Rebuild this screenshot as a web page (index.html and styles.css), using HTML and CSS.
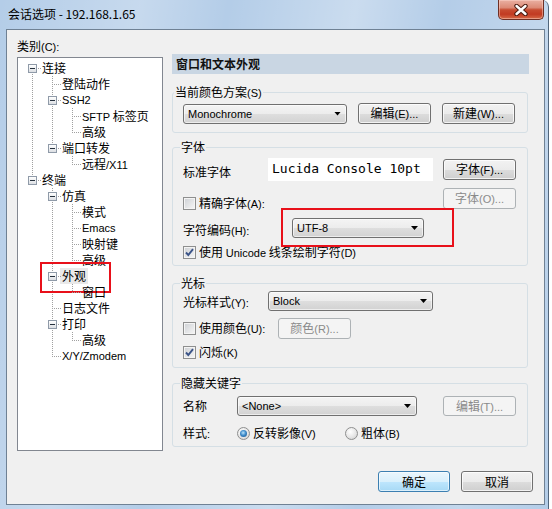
FILE: index.html
```html
<!DOCTYPE html>
<html lang="zh-CN">
<head>
<meta charset="utf-8">
<title>会话选项 - 192.168.1.65</title>
<link rel="stylesheet" href="styles.css">
</head>
<body>
<div class="window">
  <div class="titlebar">
    <span class="title">会话选项 - 192.168.1.65</span>
    <div class="close">
      <svg width="14" height="12" viewBox="0 0 14 12"><path d="M2.5 2 L11.5 10 M11.5 2 L2.5 10" stroke="#4a1b10" stroke-width="4.4" stroke-linecap="round"/><path d="M2.5 2 L11.5 10 M11.5 2 L2.5 10" stroke="#fff" stroke-width="2.4" stroke-linecap="round"/></svg>
    </div>
  </div>
  <div class="client">
    <div class="main">
      <div class="left">
        <div class="cat-label">类别<span class="en">(C):</span></div>
        <div class="tree">
          <ul>
            <li>
              <div class="node"><i class="exp"></i><span class="txt">连接</span></div>
              <ul>
                <li><div class="node"><i class="sp"></i><span class="txt">登陆动作</span></div></li>
                <li>
                  <div class="node"><i class="exp"></i><span class="txt en">SSH2</span></div>
                  <ul>
                    <li><div class="node"><i class="sp"></i><span class="txt"><span class="en">SFTP</span> 标签页</span></div></li>
                    <li><div class="node"><i class="sp"></i><span class="txt">高级</span></div></li>
                  </ul>
                </li>
                <li>
                  <div class="node"><i class="exp"></i><span class="txt">端口转发</span></div>
                  <ul>
                    <li><div class="node"><i class="sp"></i><span class="txt">远程<span class="en">/X11</span></span></div></li>
                  </ul>
                </li>
              </ul>
            </li>
            <li>
              <div class="node"><i class="exp"></i><span class="txt">终端</span></div>
              <ul>
                <li>
                  <div class="node"><i class="exp"></i><span class="txt">仿真</span></div>
                  <ul>
                    <li><div class="node"><i class="sp"></i><span class="txt">模式</span></div></li>
                    <li><div class="node"><i class="sp"></i><span class="txt en">Emacs</span></div></li>
                    <li><div class="node"><i class="sp"></i><span class="txt">映射键</span></div></li>
                    <li><div class="node"><i class="sp"></i><span class="txt">高级</span></div></li>
                  </ul>
                </li>
                <li>
                  <div class="node marked"><i class="exp"></i><span class="txt sel">外观</span></div>
                  <ul>
                    <li><div class="node"><i class="sp"></i><span class="txt">窗口</span></div></li>
                  </ul>
                </li>
                <li><div class="node"><i class="sp"></i><span class="txt">日志文件</span></div></li>
                <li>
                  <div class="node"><i class="exp"></i><span class="txt">打印</span></div>
                  <ul>
                    <li><div class="node"><i class="sp"></i><span class="txt">高级</span></div></li>
                  </ul>
                </li>
                <li><div class="node"><i class="sp"></i><span class="txt en">X/Y/Zmodem</span></div></li>
              </ul>
            </li>
          </ul>
        </div>
      </div>

      <div class="right">
        <div class="header">窗口和文本外观</div>

        <div class="group g-scheme">
          <div class="glabel gl-first">当前颜色方案<span class="en">(S)</span></div>
          <div class="row row-scheme">
            <div class="combo c-scheme"><span class="en">Monochrome</span><i class="arrow"></i></div>
            <button class="btn">编辑<span class="en">(E)...</span></button>
            <button class="btn">新建<span class="en">(W)...</span></button>
          </div>
        </div>

        <div class="group g-font">
          <div class="glabel">字体</div>
          <div class="row row-f1">
            <span class="lbl lbl-85 shift5">标准字体</span>
            <div class="fontbox">Lucida Console 10pt</div>
            <button class="btn push">字体<span class="en">(F)...</span></button>
          </div>
          <div class="row row-f2">
            <label class="check shift10"><span class="cb"></span><span>精确字体<span class="en">(A):</span></span></label>
            <button class="btn push" disabled>字体<span class="en">(O)...</span></button>
          </div>
          <div class="row row-f3">
            <span class="lbl lbl-109 shift5">字符编码<span class="en">(H):</span></span>
            <div class="mark-wrap">
              <div class="combo c-enc"><span class="en">UTF-8</span><i class="arrow"></i></div>
            </div>
          </div>
          <div class="row row-f4">
            <label class="check"><span class="cb on"><svg width="11" height="11" viewBox="0 0 11 11"><path d="M2 5.5 L4.3 8 L9 2.2" fill="none" stroke="#3b5488" stroke-width="1.9"/></svg></span><span>使用 <span class="en">Unicode</span> 线条绘制字符<span class="en">(D)</span></span></label>
          </div>
        </div>

        <div class="group g-cursor">
          <div class="glabel">光标</div>
          <div class="row row-c1">
            <span class="lbl lbl-85 shift3">光标样式<span class="en">(Y):</span></span>
            <div class="combo c-cursor"><span class="en">Block</span><i class="arrow"></i></div>
          </div>
          <div class="row row-c2">
            <label class="check w95"><span class="cb"></span><span>使用颜色<span class="en">(U):</span></span></label>
            <button class="btn" disabled>颜色<span class="en">(R)...</span></button>
          </div>
          <div class="row row-c3">
            <label class="check"><span class="cb on"><svg width="11" height="11" viewBox="0 0 11 11"><path d="M2 5.5 L4.3 8 L9 2.2" fill="none" stroke="#3b5488" stroke-width="1.9"/></svg></span><span>闪烁<span class="en">(K)</span></span></label>
          </div>
        </div>

        <div class="group g-hide">
          <div class="glabel">隐藏关键字</div>
          <div class="row row-h1">
            <span class="lbl lbl-54">名称</span>
            <div class="combo c-name"><span class="en">&lt;None&gt;</span><i class="arrow"></i></div>
            <button class="btn push" disabled>编辑<span class="en">(T)...</span></button>
          </div>
          <div class="row row-h2">
            <span class="lbl lbl-54">样式<span class="en">:</span></span>
            <label class="radio w108"><span class="rb on"></span><span>反转影像<span class="en">(V)</span></span></label>
            <label class="radio"><span class="rb"></span><span>粗体<span class="en">(B)</span></span></label>
          </div>
        </div>
      </div>
    </div>

    <div class="footer">
      <button class="btn default">确定</button>
      <button class="btn">取消</button>
    </div>
  </div>
</div>
</body>
</html>
```

FILE: styles.css
```css
* { box-sizing: border-box; }
html, body { margin: 0; padding: 0; }
body {
  width: 552px;
  height: 509px;
  overflow: hidden;
  background: #ffffff;
  font-family: "Noto Sans CJK SC", sans-serif;
  font-size: 12px;
  line-height: 16px;
  color: #000;
}
.en {
  font-family: "Liberation Sans", "Noto Sans CJK SC", sans-serif;
  font-size: 11px;
}

/* window frame */
.window {
  width: 549px;
  height: 509px;
  display: flex;
  flex-direction: column;
  border-right: 1px solid #52667c;
  border-top-right-radius: 7px;
  background:
    linear-gradient(100deg, rgba(255,255,255,0) 0%, rgba(255,255,255,.25) 22%, rgba(255,255,255,0) 36%, rgba(255,255,255,.3) 56%, rgba(255,255,255,0) 70%, rgba(255,255,255,.2) 86%, rgba(255,255,255,0) 100%),
    #b4cde8;
}
.titlebar {
  height: 29px;
  flex: none;
  display: flex;
  justify-content: space-between;
  align-items: flex-start;
  padding-left: 8px;
}
.title { margin-top: 6px; color: #000; }
.close {
  width: 46px;
  height: 20px;
  margin-right: 4px;
  border: 1px solid #6e2f24;
  border-top: none;
  border-radius: 0 0 5px 5px;
  background: linear-gradient(to bottom, #eab0a2 0%, #dc8a76 40%, #c74b30 52%, #c23a22 75%, #d66a47 100%);
  box-shadow: inset 0 0 0 1px rgba(255,220,210,.45);
  display: flex;
  align-items: center;
  justify-content: center;
}

/* client */
.client {
  margin: 0 3px 4px 6px;
  height: 476px;
  border: 1px solid #6f8194;
  background: #f0f0f0;
  padding: 8px 11px 0 10px;
  display: flex;
  flex-direction: column;
}
.main { display: flex; gap: 9px; }
.left { width: 146px; flex: none; }
.cat-label { height: 16px; }

/* tree */
.tree {
  margin-top: 3px;
  width: 146px;
  height: 394px;
  border: 1px solid #828790;
  background: #fff;
  padding-top: 2px;
}
.tree ul { list-style: none; margin: 0; padding: 0; }
.tree li { position: relative; }
.tree li ul { margin-left: 20px; }
.tree li::before {
  content: "";
  position: absolute;
  left: 14px;
  top: 0;
  width: 1px;
  height: 100%;
  background: repeating-linear-gradient(to bottom, #a0a0a0 0 1px, transparent 1px 2px);
}
.tree li:last-child::before { height: 8px; }
.tree > ul > li:first-child::before { top: 8px; height: calc(100% - 8px); }
.node {
  position: relative;
  height: 16px;
  display: flex;
  align-items: flex-start;
  padding-left: 10px;
  white-space: nowrap;
}
.node::before {
  content: "";
  position: absolute;
  left: 14px;
  top: 8px;
  width: 9px;
  height: 1px;
  background: repeating-linear-gradient(to right, #a0a0a0 0 1px, transparent 1px 2px);
}
.exp, .sp {
  flex: none;
  width: 9px;
  height: 9px;
  margin-top: 4px;
  position: relative;
  z-index: 1;
}
.exp {
  border: 1px solid #8f9aa8;
  background: linear-gradient(to bottom, #ffffff, #dcdfe3);
}
.exp::after {
  content: "";
  position: absolute;
  left: 1px;
  top: 3px;
  width: 5px;
  height: 1px;
  background: #26313d;
}
.txt { margin-left: 5px; line-height: 16px; }
.txt.sel { margin-left: 3px; padding: 0 2px; background: #e9e9e9; }
.node.marked::after {
  content: "";
  position: absolute;
  left: 2px;
  top: -6px;
  width: 67px;
  height: 27px;
  border: 2px solid #e8101a;
}

/* right column */
.right { width: 357px; flex: none; padding-top: 16px; }
.header {
  height: 20px;
  line-height: 20px;
  padding-left: 4px;
  font-weight: bold;
  color: #111;
  background: #c9d6e3;
}
.group {
  width: 356px;
  border: 1px solid #d5dfe5;
  border-radius: 3px;
  padding: 0 11px 0 10px;
}
.glabel {
  width: fit-content;
  margin: -9px 0 0 -3px;
  padding: 0 1px;
  background: #f0f0f0;
  height: 16px;
}
.glabel.gl-first { margin-left: -9px; }

.row { display: flex; align-items: center; }
.lbl { flex: none; white-space: nowrap; }
.lbl-85 { width: 85px; }
.lbl-109 { width: 109px; }
.lbl-54 { width: 54px; }
.shift3 { margin-top: 3px; }
.shift5 { margin-top: 5px; }
.shift10 { margin-top: 10px; }

/* group geometry */
.g-scheme { margin-top: 18px; padding-bottom: 8px; }
.row-scheme { margin-top: 3px; height: 21px; gap: 11px; }
.c-scheme { width: 164px; }

.g-font { margin-top: 14px; padding-bottom: 6px; }
.row-f1 { margin-top: 3px; height: 23px; }
.row-f2 { margin-top: 7px; height: 21px; }
.row-f3 { margin-top: 9px; height: 20px; }
.row-f4 { margin-top: 8px; height: 13px; }
.c-enc { width: 132px; }

.g-cursor { margin-top: 17px; padding-bottom: 8px; }
.row-c1 { margin-top: 0; height: 20px; }
.row-c2 { margin-top: 7px; height: 21px; }
.row-c3 { margin-top: 7px; height: 13px; }
.c-cursor { width: 165px; }
.w95 { width: 95px; flex: none; }

.g-hide { margin-top: 15px; padding-bottom: 6px; }
.row-h1 { margin-top: 5px; height: 20px; }
.row-h2 { margin-top: 11px; height: 13px; }
.c-name { width: 180px; }
.w108 { width: 108px; flex: none; }

/* font preview box */
.fontbox {
  width: 165px;
  height: 23px;
  flex: none;
  background: #fff;
  padding: 2px 0 0 4px;
  font-family: "DejaVu Sans Mono", monospace;
  font-size: 13px;
  line-height: 17px;
  white-space: nowrap;
}

/* combo box */
.combo {
  flex: none;
  height: 20px;
  border: 1px solid #707070;
  border-radius: 3px;
  background: linear-gradient(to bottom, #f4f4f4 0%, #ececec 50%, #dedede 51%, #d2d2d2 100%);
  box-shadow: inset 0 0 0 1px rgba(255,255,255,.6);
  display: flex;
  align-items: center;
  justify-content: space-between;
  padding: 0 5px 0 4px;
  white-space: nowrap;
}
.arrow {
  width: 7px;
  height: 4px;
  background: #000;
  clip-path: polygon(0 0, 100% 0, 50% 100%);
}
.mark-wrap { position: relative; }
.mark-wrap::after {
  content: "";
  position: absolute;
  left: -11px;
  top: -10px;
  width: 169px;
  height: 35px;
  border: 2px solid #e8101a;
}

/* buttons */
.btn {
  flex: none;
  width: 73px;
  height: 21px;
  margin: 0;
  padding: 0;
  font: inherit;
  color: #000;
  border: 1px solid #707070;
  border-radius: 3px;
  background: linear-gradient(to bottom, #f2f2f2 0%, #ebebeb 50%, #dddddd 51%, #cfcfcf 100%);
  box-shadow: inset 0 0 0 1px rgba(255,255,255,.75);
  text-align: center;
  white-space: nowrap;
}
.btn.push { margin-left: auto; }
.btn:disabled {
  color: #8a8a8a;
  border-color: #adb2b5;
  background: #f4f4f4;
  box-shadow: none;
}
.g-hide .btn { height: 20px; }
.btn.default {
  border-color: #3c7fb1;
  background: linear-gradient(to bottom, #eaf6fd 0%, #d9f0fc 50%, #bee6fd 51%, #a7d9f5 100%);
  box-shadow: inset 0 0 0 1px rgba(255,255,255,.6);
}

/* footer */
.footer {
  display: flex;
  justify-content: flex-end;
  gap: 11px;
  margin-top: 20px;
}
.footer .btn { width: 72px; }

/* checkbox / radio */
.check, .radio {
  display: flex;
  align-items: center;
  white-space: nowrap;
}
.check > span:last-child, .radio > span:last-child { margin-left: 3px; }
.cb {
  flex: none;
  width: 13px;
  height: 13px;
  border: 1px solid #8e8f8f;
  background: linear-gradient(135deg, #cdd0d4 0%, #f7f7f7 100%);
  box-shadow: inset 0 0 0 1px #f4f4f4;
  position: relative;
}
.cb svg { position: absolute; left: 0; top: 0; }
.rb {
  flex: none;
  width: 13px;
  height: 13px;
  border-radius: 50%;
  border: 1px solid #8e8f8f;
  background: radial-gradient(circle at 40% 35%, #ffffff 0%, #e6e6e6 55%, #c9c9c9 100%);
  position: relative;
}
.rb.on::after {
  content: "";
  position: absolute;
  left: 2px;
  top: 2px;
  width: 7px;
  height: 7px;
  border-radius: 50%;
  background: radial-gradient(circle at 45% 40%, #b9e3fb 0%, #3f8ccb 45%, #144f86 100%);
}
```
